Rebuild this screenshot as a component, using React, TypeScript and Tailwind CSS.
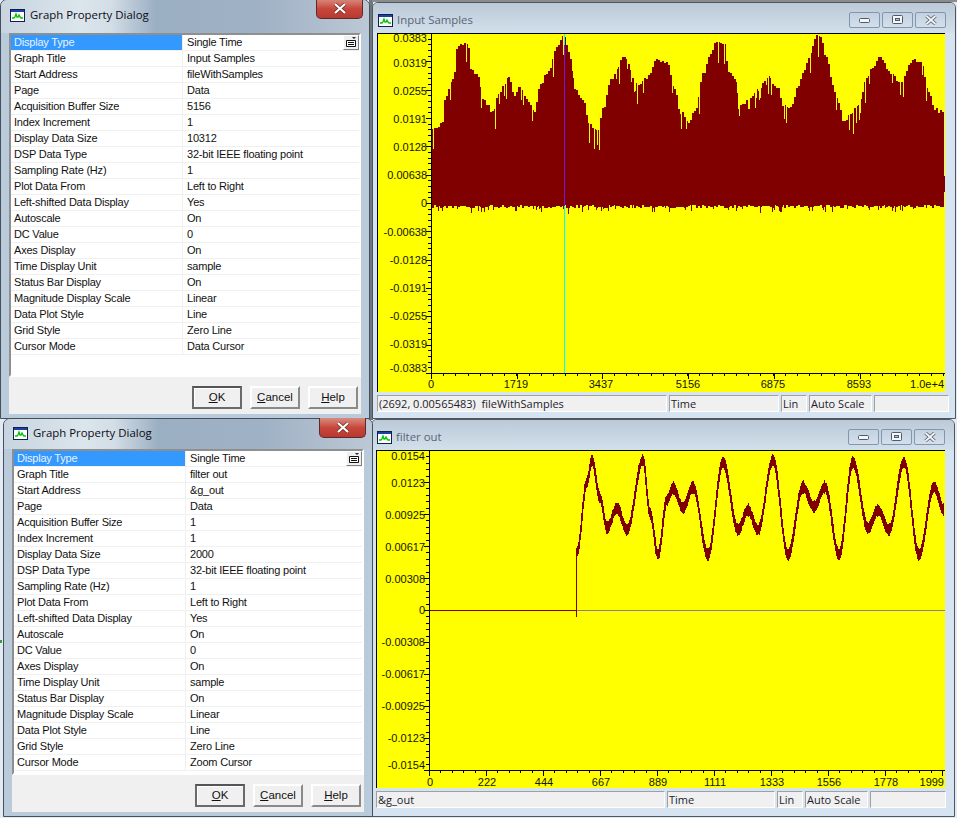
import React from "react";

const UI_FONT = "font-['Liberation_Sans',Arial,sans-serif]";
const TITLE_FONT = "font-['Open_Sans','Noto_Sans',sans-serif]";

type Row = [string, string];

const commonRows = (
  title: string,
  address: string,
  bufferSize: string,
  dataSize: string,
  cursor: string
): Row[] => [
  ["Display Type", "Single Time"],
  ["Graph Title", title],
  ["Start Address", address],
  ["Page", "Data"],
  ["Acquisition Buffer Size", bufferSize],
  ["Index Increment", "1"],
  ["Display Data Size", dataSize],
  ["DSP Data Type", "32-bit IEEE floating point"],
  ["Sampling Rate (Hz)", "1"],
  ["Plot Data From", "Left to Right"],
  ["Left-shifted Data Display", "Yes"],
  ["Autoscale", "On"],
  ["DC Value", "0"],
  ["Axes Display", "On"],
  ["Time Display Unit", "sample"],
  ["Status Bar Display", "On"],
  ["Magnitude Display Scale", "Linear"],
  ["Data Plot Style", "Line"],
  ["Grid Style", "Zero Line"],
  ["Cursor Mode", cursor],
];

// small pseudo random so the traces stay the same on every load
function makeRandom(seed: number) {
  let s = seed;
  return () => {
    s = (s * 1664525 + 1013904223) % 4294967296;
    return s / 4294967296;
  };
}

function smooth(points: number[][], x: number) {
  for (let i = 0; i < points.length - 1; i++) {
    const [x0, y0] = points[i];
    const [x1, y1] = points[i + 1];
    if (x >= x0 && x <= x1) {
      const t = (x - x0) / (x1 - x0);
      const k = (1 - Math.cos(t * Math.PI)) / 2;
      return y0 + (y1 - y0) * k;
    }
  }
  return points[points.length - 1][1];
}

const inputEnvelope = [
  [432, 130], [442, 124], [444, 100], [453, 77], [457, 45], [467, 43], [470, 70], [478, 77], [482, 100], [493, 112],
  [498, 93], [508, 77], [513, 95], [520, 88], [527, 100], [533, 112], [540, 85], [547, 72], [557, 47], [563, 36],
  [570, 58], [575, 90], [583, 100], [588, 124], [597, 130], [603, 107], [610, 80], [623, 58], [637, 85], [645, 78],
  [657, 60], [667, 62], [673, 87], [680, 112], [688, 124], [695, 108], [703, 73], [710, 55], [715, 43], [723, 43],
  [728, 70], [735, 80], [740, 105], [748, 100], [757, 90], [767, 77], [777, 88], [782, 105], [790, 108], [797, 87],
  [803, 72], [808, 57], [815, 38], [818, 34], [827, 60], [832, 85], [837, 100], [843, 122], [850, 115], [857, 105],
  [867, 78], [870, 68], [880, 58], [890, 73], [900, 83], [910, 62], [920, 60], [927, 90], [935, 110], [943, 113],
];

const filterCenter = [
  [577, 552], [587, 482], [592, 460], [600, 498], [607, 528], [617, 508], [627, 530], [643, 460], [650, 513], [658, 555],
  [667, 500], [673, 488], [683, 508], [693, 487], [708, 555], [723, 462], [738, 530], [748, 510], [758, 530], [773, 460],
  [788, 555], [803, 487], [814, 507], [825, 487], [839, 555], [853, 462], [868, 528], [878, 510], [889, 530], [904, 462],
  [919, 555], [934, 487], [944, 510],
];

function inputWave() {
  const rand = makeRandom(7);
  let d = "";
  let top = 0;
  let bottom = 0;
  for (let x = 432; x <= 943; x++) {
    if (x % 2 === 0) {
      top = smooth(inputEnvelope, x) + rand() * 4 - 2;
      bottom = 205 + rand() * 3;
    }
    let t = top;
    let b = bottom;
    // single pixel yellow spikes cutting into the filled part
    if (rand() < 0.12) t += 6 + rand() * 16;
    if (rand() < 0.1) b += 2 + rand() * 4;
    d += `M${x + 0.5} ${Math.round(t)}V${Math.round(b)}`;
  }
  d += "M944.5 176V192";
  return d;
}

function filterWave() {
  const rand = makeRandom(11);
  let d = "M576.5 548V617";
  for (let x = 577; x <= 943; x++) {
    const c0 = smooth(filterCenter, x);
    const c1 = smooth(filterCenter, x + 1);
    // noise reads thicker where the curve is flat
    const amp = 2.5 + rand() * 2 + 4 / (1 + Math.abs(c1 - c0) * 1.5);
    const top = Math.min(c0, c1) - amp;
    const bottom = Math.max(c0, c1) + amp;
    d += `M${x + 0.5} ${Math.round(top)}V${Math.round(bottom)}`;
  }
  return d;
}

function GraphIcon() {
  return (
    <svg width="15" height="13" viewBox="0 0 15 13" className="shrink-0">
      <rect x="0.5" y="0.5" width="14" height="12" fill="#fff" stroke="#10204a" />
      <rect x="1" y="1" width="13" height="2" fill="#1c3fa8" />
      <path d="M2 9h2l1-1 1-3 1 3h1l1-2 1 2 1 1h2" fill="none" stroke="#00c000" strokeWidth="1.3" />
    </svg>
  );
}

function CaptionGlyph({ kind }: { kind: "min" | "max" | "close" }) {
  if (kind === "min") {
    return (
      <svg width="12" height="7" viewBox="0 0 12 7">
        <rect x="0.5" y="1.5" width="10" height="4" rx="1" fill="#f4f6f9" stroke="#4d5a6c" />
      </svg>
    );
  }
  if (kind === "max") {
    return (
      <svg width="12" height="10" viewBox="0 0 12 10">
        <rect x="0.5" y="0.5" width="10" height="8" rx="1" fill="#f4f6f9" stroke="#4d5a6c" />
        <rect x="3.5" y="3.5" width="4" height="2" fill="#b9c8d9" stroke="#4d5a6c" />
      </svg>
    );
  }
  return (
    <svg width="12" height="10" viewBox="0 0 12 10">
      <path d="M1.5 1l9 8M10.5 1l-9 8" stroke="#4d5a6c" strokeWidth="3.4" />
      <path d="M1.5 1l9 8M10.5 1l-9 8" stroke="#f4f6f9" strokeWidth="1.8" />
    </svg>
  );
}

function CaptionButton({ kind }: { kind: "min" | "max" | "close" }) {
  return (
    <div className="flex h-[16px] w-[31px] items-center justify-center rounded-[2px] border border-[#8496ae] bg-gradient-to-b from-[#c4d1de] to-[#d3e0ec]">
      <CaptionGlyph kind={kind} />
    </div>
  );
}

function DialogButton({ label, hot, primary }: { label: string; hot: number; primary?: boolean }) {
  return (
    <div
      className={`${UI_FONT} flex h-[23px] w-[50px] items-center justify-center bg-[#f0f0f0] text-[11.5px] text-[#111] ${
        primary
          ? "border-2 border-[#6a6a6a] border-t-[#555] shadow-[inset_1px_1px_0_#fff]"
          : "border-2 border-t-white border-l-white border-r-[#8a8a8a] border-b-[#8a8a8a]"
      }`}
    >
      <span>
        {label.slice(0, hot)}
        <span className="underline">{label[hot]}</span>
        {label.slice(hot + 1)}
      </span>
    </div>
  );
}

function PropertyDialog({
  className,
  titleClass,
  tableClass,
  rows,
}: {
  className: string;
  titleClass: string;
  tableClass: string;
  rows: Row[];
}) {
  return (
    <div
      className={`absolute flex flex-col rounded-t-[7px] border border-[#46505c] bg-[#b9cadb] px-[8px] pb-[4px] ${className}`}
    >
      <div className={`relative flex shrink-0 items-center gap-[5px] -mx-[8px] px-[9px] rounded-t-[6px] bg-[linear-gradient(90deg,#c8d5e0_0%,#dbe5ec_22%,#d2dde6_30%,#9bafc3_42%,#9fb1c5_70%,#bcc8d5_100%)] ${titleClass}`}>
        <GraphIcon />
        <span className={`${TITLE_FONT} text-[11.4px] text-[#0c0c14]`}>Graph Property Dialog</span>
        <div className="absolute right-[6px] top-[-1px] flex h-[20px] w-[47px] items-center justify-center rounded-b-[5px] border border-t-0 border-[#5c2a28] bg-gradient-to-b from-[#d98a80] via-[#c8473c] to-[#b8392f]">
          <svg width="14" height="11" viewBox="0 0 14 11">
            <path d="M2 1l10 9M12 1L2 10" stroke="#6b2c28" strokeWidth="3.6" />
            <path d="M2 1l10 9M12 1L2 10" stroke="#fff" strokeWidth="2.2" />
          </svg>
        </div>
      </div>

      <div className="flex flex-1 flex-col bg-[#f0f0f0]">
        <div className={`border-2 border-t-[#8f8f8f] border-l-[#8f8f8f] border-r-white border-b-white bg-white ${tableClass}`}>
          {rows.map(([name, value], i) => (
            <div key={name} className={`${UI_FONT} flex h-[16px] border-b border-[#f0f0f0] text-[11px] leading-[15px] tracking-[-0.2px] text-[#111]`}>
              <div className={`w-[172px] shrink-0 border-r border-[#f0f0f0] pl-[3px] ${i === 0 ? "bg-[#3399ff] text-[#e8f2ff]" : ""}`}>
                {name}
              </div>
              <div className="relative flex-1 pl-[4px]">
                {value}
                {i === 0 && (
                  <div className="absolute right-0 top-0 flex h-[15px] w-[16px] items-center justify-center border border-t-white border-l-white border-r-[#808080] border-b-[#808080] bg-[#f0f0f0]">
                    <svg width="12" height="11" viewBox="0 0 12 11">
                      <path d="M8 0h2v1H8zM1.5 3.5h9v6h-9z" fill="#fff" stroke="#111" strokeWidth="1" />
                      <path d="M3 5.5h6M3 7.5h6" stroke="#111" />
                    </svg>
                  </div>
                )}
              </div>
            </div>
          ))}
        </div>
        <div className="flex flex-1 items-center justify-end gap-[8px] pr-[3px] pt-[4px]">
          <DialogButton label="OK" hot={0} primary />
          <DialogButton label="Cancel" hot={0} />
          <DialogButton label="Help" hot={0} />
        </div>
      </div>
    </div>
  );
}

type AxisLabel = [string, number];

type ChartProps = {
  viewBox: string;
  width: number;
  height: number;
  axisX: number;
  top: number;
  bottom: number;
  right: number;
  yLabels: AxisLabel[];
  yTicks: number[];
  yMajor: number[];
  xLabels: AxisLabel[];
  xTicks: number[];
  xMajor: number[];
  labelY: number;
  children: React.ReactNode;
};

function Chart(p: ChartProps) {
  return (
    <svg
      width={p.width}
      height={p.height}
      viewBox={p.viewBox}
      className="block border-t border-l border-black bg-[#ffff00]"
      shapeRendering="crispEdges"
    >
      {p.children}
      <path d={`M${p.axisX + 0.5} ${p.top}V${p.bottom + 1}M${p.axisX} ${p.bottom + 0.5}H${p.right}`} stroke="#000" fill="none" />
      {p.yTicks.map((y) => (
        <path key={y} d={`M${p.axisX - 3} ${Math.round(y) + 0.5}H${p.axisX}`} stroke="#000" />
      ))}
      {p.yMajor.map((y) => (
        <path key={y} d={`M${p.axisX - 5} ${Math.round(y) + 0.5}H${p.axisX}`} stroke="#000" />
      ))}
      {p.xTicks.map((x) => (
        <path key={x} d={`M${Math.round(x) + 0.5} ${p.bottom + 1}V${p.bottom + 3}`} stroke="#000" />
      ))}
      {p.xMajor.map((x) => (
        <path key={x} d={`M${Math.round(x) + 0.5} ${p.bottom + 1}V${p.bottom + 6}`} stroke="#000" />
      ))}
      <g fontFamily="'Liberation Sans', Arial, sans-serif" fontSize="11" fill="#141400" shapeRendering="auto">
        {p.yLabels.map(([text, y]) => (
          <text key={text} x={p.axisX - 4} y={y + 4} textAnchor="end">
            {text}
          </text>
        ))}
        {p.xLabels.map(([text, x], i) => (
          <text
            key={text}
            x={x}
            y={p.labelY}
            textAnchor={i === p.xLabels.length - 1 ? "end" : "middle"}
          >
            {text}
          </text>
        ))}
      </g>
    </svg>
  );
}

function StatusCell({ className, text }: { className: string; text?: string }) {
  return (
    <div
      className={`${TITLE_FONT} h-[17px] overflow-hidden whitespace-pre border border-t-[#a0a0a0] border-l-[#a0a0a0] border-r-white border-b-white bg-[#f0f0f0] pl-[1px] text-[11px] leading-[15px] text-[#1c1c2c] ${className}`}
    >
      {text}
    </div>
  );
}

function GraphWindow({
  className,
  title,
  status,
  widths,
  children,
}: {
  className: string;
  title: string;
  status: string;
  widths: string[];
  children: React.ReactNode;
}) {
  const texts = [status, "Time", "Lin", "Auto Scale", ""];
  return (
    <div className={`absolute flex flex-col rounded-t-[6px] border border-[#4e5660] bg-[#d6e3f0] px-[4px] ${className}`}>
      <div className="-mx-[4px] flex h-[30px] shrink-0 items-center gap-[4px] rounded-t-[5px] bg-gradient-to-b from-[#bccad8] to-[#d2e0ec] pl-[5px] pr-[9px] pt-[4px]">
        <GraphIcon />
        <span className={`${TITLE_FONT} flex-1 text-[11.4px] text-[#5a6474]`}>{title}</span>
        <div className="flex gap-[2px]">
          <CaptionButton kind="min" />
          <CaptionButton kind="max" />
          <CaptionButton kind="close" />
        </div>
      </div>
      {children}
      <div className="mt-[3px] flex gap-[2px]">
        {texts.map((t, i) => (
          <StatusCell key={i} className={widths[i]} text={t} />
        ))}
      </div>
    </div>
  );
}

const range = (from: number, to: number, step: number) => {
  const out: number[] = [];
  for (let v = from; v <= to + 0.01; v += step) out.push(v);
  return out;
};

const inputPath = inputWave();
const filterPath = filterWave();

export default function App() {
  return (
    <div className="relative h-[818px] w-[957px] overflow-hidden bg-[#e4eaf1]">
      <div className="absolute left-[369px] top-0 h-[420px] w-[4px] bg-[#70767e]" />
      <div className="absolute left-[372px] top-0 h-[2px] w-[585px] bg-[#8b8b8b]" />
      <div className="absolute left-0 top-[640px] h-[3px] w-[2px] bg-[#3c9a3c]" />

      <GraphWindow
        className="left-[372px] top-[2px] h-[417px] w-[584px]"
        title="Input Samples"
        status="(2692, 0.00565483)  fileWithSamples"
        widths={["w-[290px]", "w-[110px]", "w-[26px]", "w-[63px]", "w-[75px]"]}
      >
        <Chart
          viewBox="378 34 567 358"
          width={568}
          height={359}
          axisX={431}
          top={33}
          bottom={373}
          right={945}
          yLabels={[
            ["0.0383", 38], ["0.0319", 63], ["0.0255", 91], ["0.0191", 119], ["0.0128", 147], ["0.00638", 175], ["0", 203],
            ["-0.00638", 232], ["-0.0128", 260], ["-0.0191", 288], ["-0.0255", 316], ["-0.0319", 344], ["-0.0383", 368],
          ]}
          yTicks={range(33, 373, 5.667)}
          yMajor={range(33, 373, 28.33)}
          xLabels={[
            ["0", 431], ["1719", 516], ["3437", 601], ["5156", 688], ["6875", 773], ["8593", 859], ["1.0e+4", 944],
          ]}
          xTicks={range(431, 945, 12.2)}
          xMajor={range(431, 945, 85.7)}
          labelY={388}
        >
          <path d={inputPath} stroke="#800000" fill="none" />
          <path d="M564.5 33V373" stroke="#00ffff" />
          <path d="M564.5 45V206" stroke="#7a10e0" />
        </Chart>
      </GraphWindow>

      <GraphWindow
        className="left-[371px] top-[419px] h-[398px] w-[584px]"
        title="filter out"
        status="&g_out"
        widths={["w-[289px]", "w-[108px]", "w-[26px]", "w-[63px]", "w-[76px]"]}
      >
        <Chart
          viewBox="377 451 568 337"
          width={569}
          height={338}
          axisX={429}
          top={450}
          bottom={770}
          right={945}
          yLabels={[
            ["0.0154", 456], ["0.0123", 483], ["0.00925", 515], ["0.00617", 547], ["0.00308", 579], ["0", 610],
            ["-0.00308", 642], ["-0.00617", 674], ["-0.00925", 706], ["-0.0123", 738], ["-0.0154", 765],
          ]}
          yTicks={range(450, 770, 6.4)}
          yMajor={range(450, 770, 32)}
          xLabels={[
            ["0", 430], ["222", 487], ["444", 544], ["667", 601], ["889", 658], ["1111", 715], ["1333", 772], ["1556", 829],
            ["1778", 886], ["1999", 944],
          ]}
          xTicks={range(429, 945, 11.4)}
          xMajor={range(429, 945, 57)}
          labelY={786}
        >
          <path d="M577 610.5H945" stroke="#83809a" />
          <path d="M429 610.5H577" stroke="#800000" />
          <path d={filterPath} stroke="#800000" fill="none" />
        </Chart>
      </GraphWindow>

      <PropertyDialog
        className="left-0 top-[-1px] h-[420px] w-[370px]"
        titleClass="h-[33px] pb-[3px]"
        tableClass="h-[344px]"
        rows={commonRows("Input Samples", "fileWithSamples", "5156", "10312", "Data Cursor")}
      />
      <PropertyDialog
        className="left-[3px] top-[418px] h-[399px] w-[370px]"
        titleClass="h-[30px] pb-[2px]"
        tableClass="h-[326px]"
        rows={commonRows("filter out", "&g_out", "1", "2000", "Zoom Cursor")}
      />
    </div>
  );
}
